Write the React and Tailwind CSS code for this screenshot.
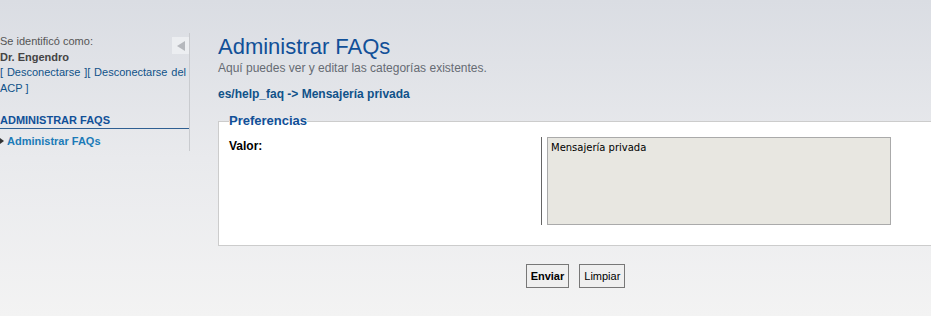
export default function App() {
  return (
    <div className="h-[316px] w-[931px] overflow-hidden bg-gradient-to-b from-[#dadde3] via-[#e9eaed] to-[#f3f3f3] font-['Liberation_Sans',Arial,sans-serif]">
      <div className="flex items-start">
        {/* sidebar */}
        <aside className="relative mt-[33px] w-[190px] shrink-0 border-r border-[#c9cbcf] pb-[2px]">
          <button className="absolute right-0 top-[4px] flex h-[17px] w-[17px] items-center justify-center bg-[#eceef1]">
            <span className="block h-0 w-0 border-y-[5px] border-r-[8px] border-y-transparent border-r-[#b5b8bd]" />
          </button>
          <div className="pr-[3px] text-[11px] leading-[15.5px] text-[#555]">
            <p className="mt-[1px]">Se identificó como:</p>
            <p className="font-bold text-[#444]">Dr. Engendro</p>
            <p className="text-justify text-[#105289] [text-align-last:justify]">[ Desconectarse ][ Desconectarse del</p>
            <p className="text-[#105289]">ACP ]</p>
          </div>
          <h3 className="mt-[17px] border-b border-[#2f5f92] pb-[1px] text-[11px] font-bold uppercase leading-[14px] text-[#115098]">Administrar FAQs</h3>
          <ul className="mt-[4px] text-[11px] font-bold leading-[16px]">
            <li className="flex items-center gap-[3px]">
              <span className="block h-0 w-0 border-y-[3px] border-l-[4px] border-y-transparent border-l-[#333]" />
              <a className="text-[#1b7bb8]">Administrar FAQs</a>
            </li>
          </ul>
        </aside>

        {/* main */}
        <main className="ml-[28px] mt-[34px] w-[715px] shrink-0">
          <h1 className="text-[22px] leading-[26px] text-[#115098]">Administrar FAQs</h1>
          <p className="text-[12px] leading-[16px] text-[#666b73]">Aquí puedes ver y editar las categorías existentes.</p>
          <p className="mt-[10px] text-[12px] font-bold leading-[16px] text-[#105289]">es/help_faq -&gt; Mensajería privada</p>

          <fieldset className="mt-[12px] border border-[#ccc] bg-white px-[10px] pb-[20px] pt-[9px]">
            <legend className="px-0 text-[13px] font-bold leading-[14px] text-[#115098]">Preferencias</legend>
            <dl className="flex">
              <dt className="w-[312px] pt-[1px] text-[12px] font-bold leading-[16px] text-black">Valor:</dt>
              <dd className="border-l border-[#666] pl-[5px]">
                <textarea
                  readOnly
                  defaultValue="Mensajería privada"
                  className="block h-[88px] w-[344px] resize-none border border-[#aaa] bg-[#e8e7e1] px-[3px] py-[3px] font-['DejaVu_Sans',Verdana,sans-serif] text-[10px] leading-[13px] text-black outline-none"
                />
              </dd>
            </dl>
          </fieldset>

          <div className="mt-[18px] flex justify-center gap-[10px]">
            <button className="h-[24px] border border-[#777] bg-[#efefef] px-[4px] text-[11px] font-bold text-black">Enviar</button>
            <button className="h-[24px] border border-[#777] bg-[#efefef] px-[4px] text-[11px] text-black">Limpiar</button>
          </div>
        </main>
      </div>
    </div>
  );
}
